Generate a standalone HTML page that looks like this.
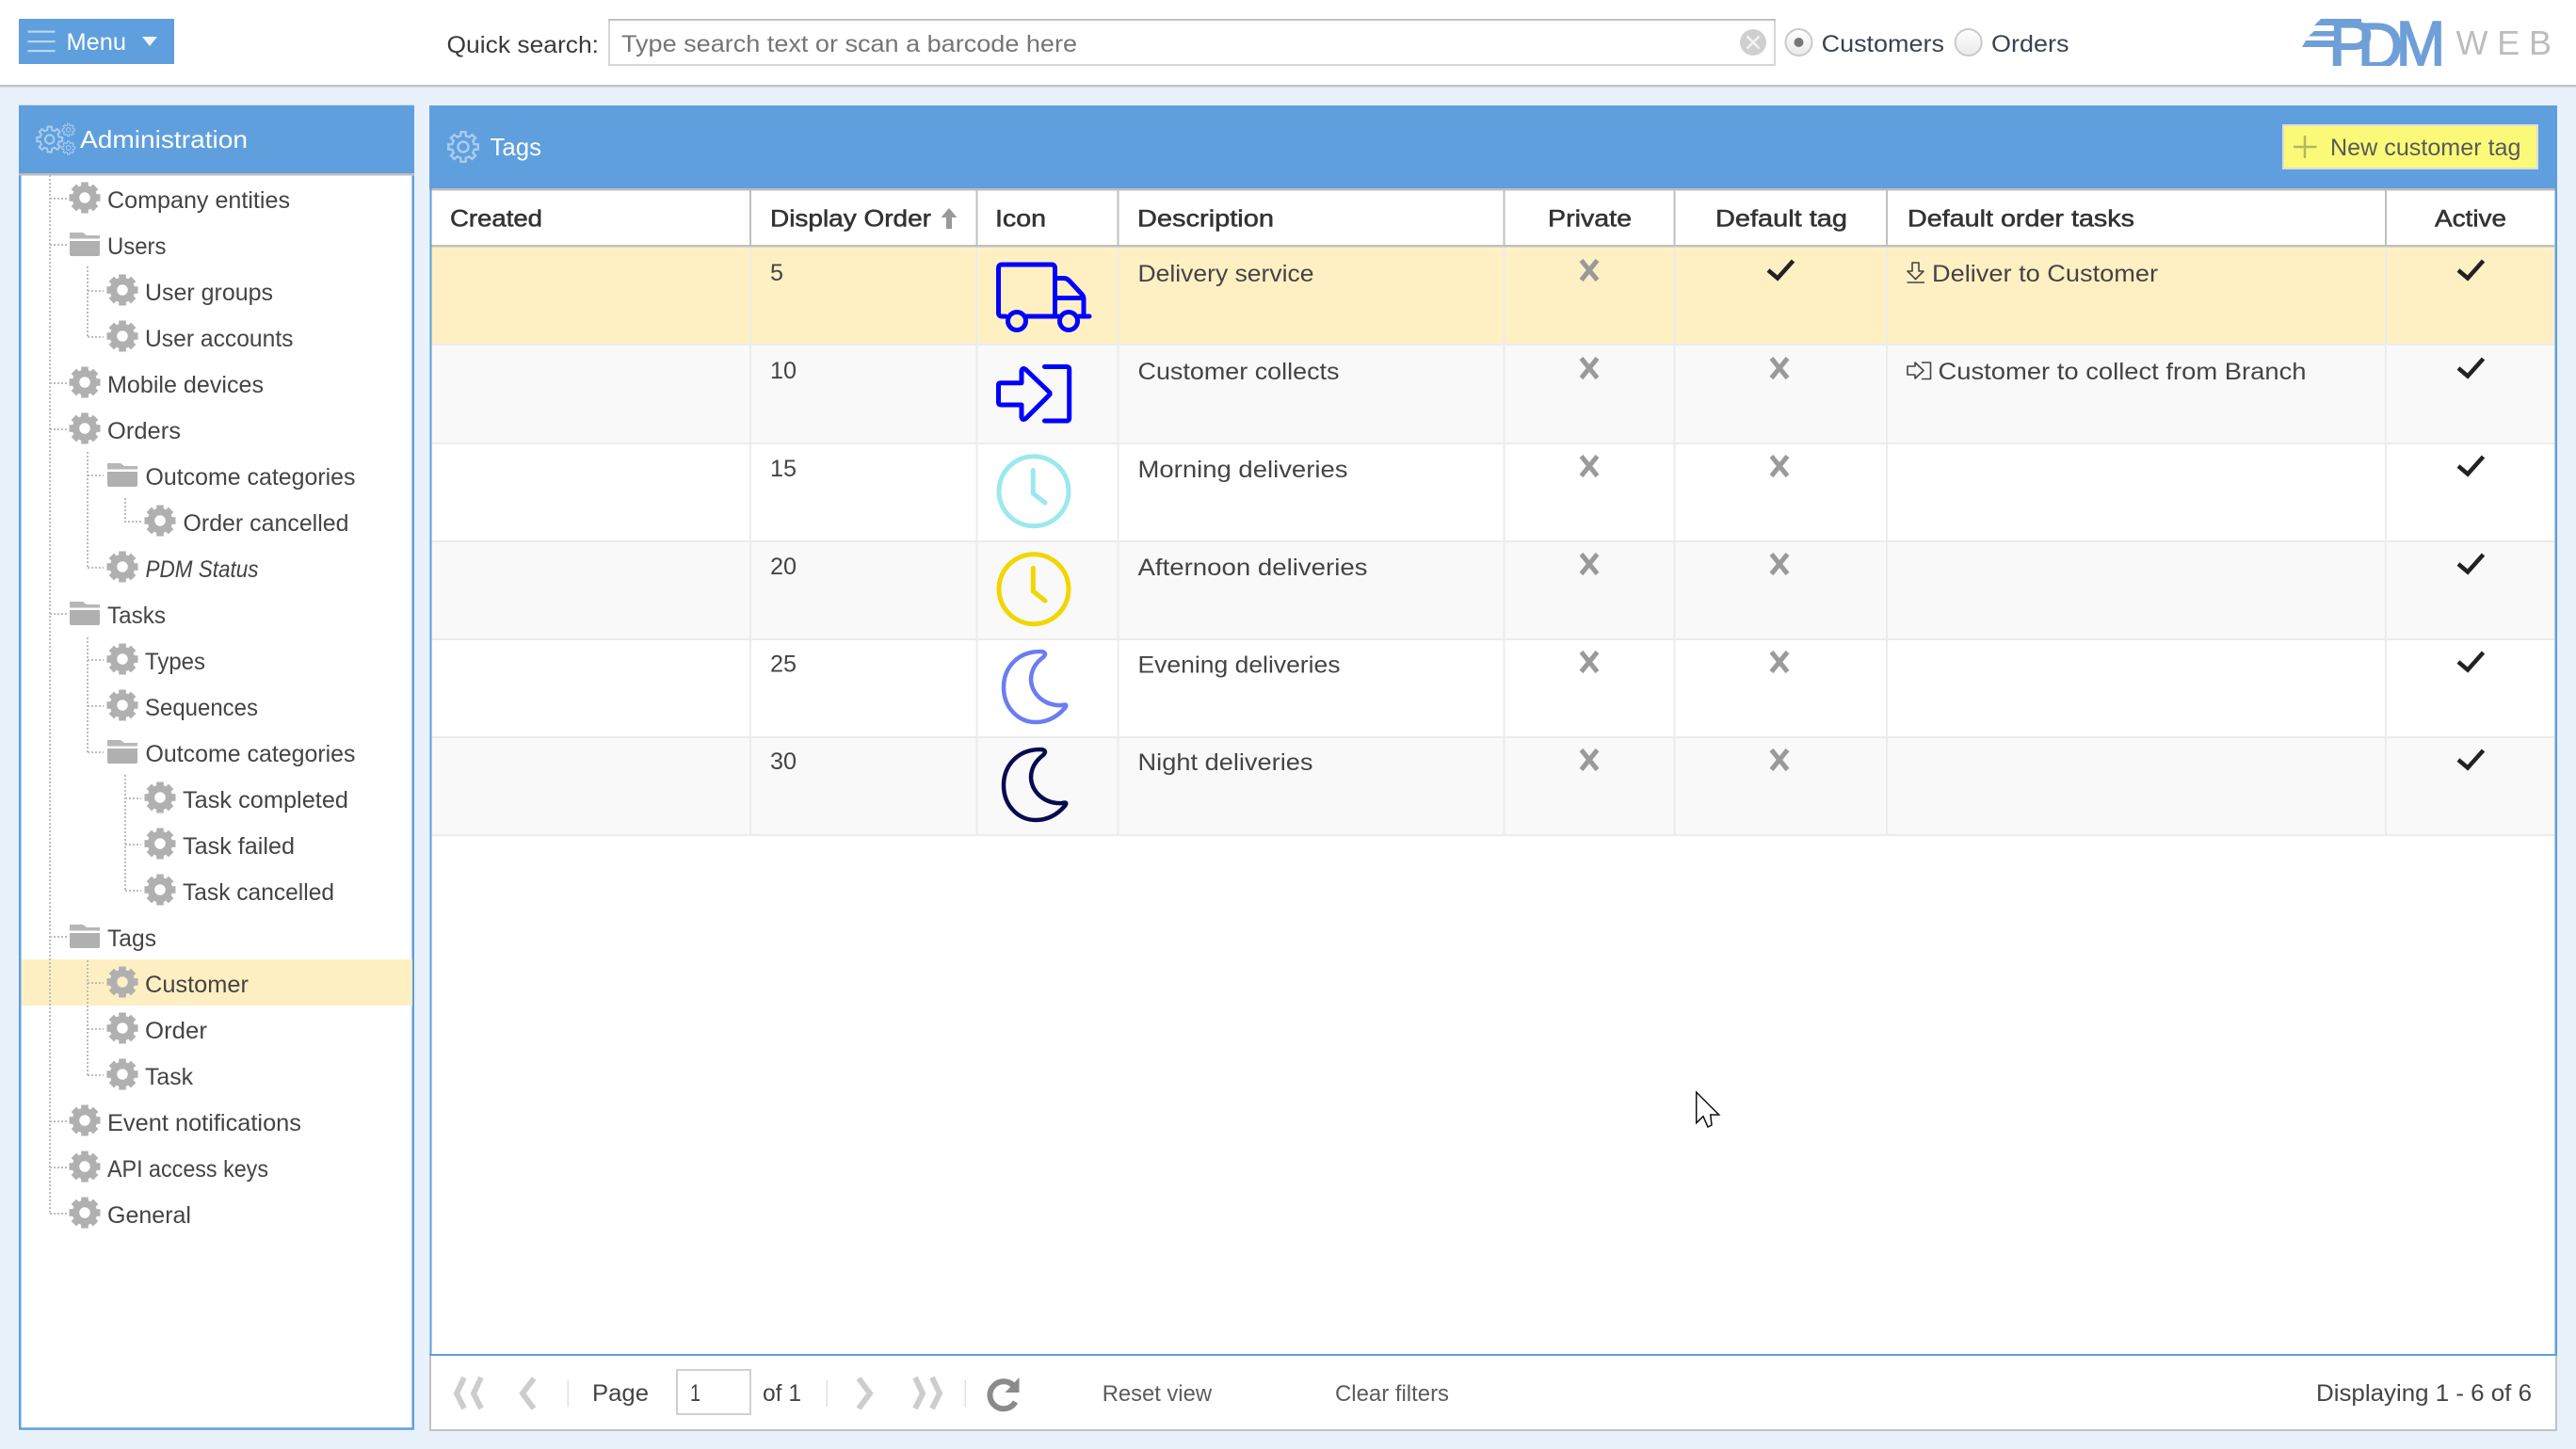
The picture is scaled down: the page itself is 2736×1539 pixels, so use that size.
<!DOCTYPE html>
<html><head><meta charset="utf-8"><title>Tags</title>
<style>
html,body{margin:0;padding:0;background:#e9f1fb;width:2736px;height:1539px;overflow:hidden}
svg{display:block;position:absolute;left:0;top:0}
text{font-family:"Liberation Sans",sans-serif;font-size:25px;fill:#444}
.h{stroke:#333;stroke-width:.55px;fill:#333}
.w{fill:#fff}
.lg{font-size:68px;fill:#6f9fd8;stroke:#6f9fd8;stroke-width:2px}
</style></head><body>
<svg width="2736" height="1539" viewBox="0 0 2736 1539" xmlns="http://www.w3.org/2000/svg">
<defs>
<g id="gf"><circle r="9.500" fill="none" stroke="#b0b0b0" stroke-width="7.500"/>
<g fill="#b0b0b0"><rect x="-3.800" y="-16.500" width="7.600" height="6"/><rect x="-3.800" y="-16.500" width="7.600" height="6" transform="rotate(45)"/><rect x="-3.800" y="-16.500" width="7.600" height="6" transform="rotate(90)"/><rect x="-3.800" y="-16.500" width="7.600" height="6" transform="rotate(135)"/><rect x="-3.800" y="-16.500" width="7.600" height="6" transform="rotate(180)"/><rect x="-3.800" y="-16.500" width="7.600" height="6" transform="rotate(225)"/><rect x="-3.800" y="-16.500" width="7.600" height="6" transform="rotate(270)"/><rect x="-3.800" y="-16.500" width="7.600" height="6" transform="rotate(315)"/></g></g>
<g id="fo"><path d="M0 0H14L18 3H32V6.500H0Z" fill="#b7b7b7"/><path d="M0 9H32V23.500L31 25H1L0 23.500Z" fill="#b0b0b0"/></g>
<path id="th" d="M-4.59-11.09L-2.9-11.64-2.5-15.8H2.5L2.9-11.64 4.59-11.09"/>
<g id="go" fill="none" stroke="#a9cdf0" stroke-width="2.400"><circle r="5.500"/><use href="#th"/><use href="#th" transform="rotate(45)"/><use href="#th" transform="rotate(90)"/><use href="#th" transform="rotate(135)"/><use href="#th" transform="rotate(180)"/><use href="#th" transform="rotate(225)"/><use href="#th" transform="rotate(270)"/><use href="#th" transform="rotate(315)"/></g>
<path id="x" d="M-8.500-10.500L8.500 10.500M8.500-10.500L-8.500 10.500" fill="none" stroke="#9a9a9a" stroke-width="5"/>
<path id="c" d="M-12 1L-2 9.500 14.500-9" fill="none" stroke="#222" stroke-width="4.500"/>
<path id="moon" d="M1105 692C1080 692 1066 710 1066 730C1066 752 1082 767 1100 767C1114 767 1124 760 1131 752C1134 748 1131 748 1128 749C1110 750 1096 738 1095 722C1095 712 1100 704 1108 698C1112 694 1109 692 1105 692Z" fill="none" stroke-width="4.500" stroke-linejoin="round"/>
<linearGradient id="rg" x1="0" y1="0" x2="0" y2="1"><stop offset="0" stop-color="#fff"/><stop offset="1" stop-color="#e9e9e9"/></linearGradient>
</defs>

<!-- top bar -->
<rect width="2736" height="90" fill="#fff"/>
<rect y="90" width="2736" height="2.500" fill="#c4c4c4"/>
<rect x="20" y="20" width="165" height="48" fill="#5f9fdd"/>
<g fill="#b9d6f2"><rect x="29.500" y="32.500" width="29" height="2.200"/><rect x="29.500" y="43" width="29" height="2.200"/><rect x="29.500" y="53" width="29" height="2.200"/></g>
<text class="w" x="70.500" y="53" textLength="63.500" lengthAdjust="spacingAndGlyphs">Menu</text>
<path d="M151 39H167L159 49Z" fill="#eef5fc"/>
<text x="474.500" y="56" textLength="161.500" lengthAdjust="spacingAndGlyphs" style="fill:#3a3a3a">Quick search:</text>
<rect x="647" y="21" width="1238" height="48" fill="#fff" stroke="#d6d6d6" stroke-width="2"/>
<rect x="646" y="20" width="1240" height="2" fill="#c2c2c2"/>
<text x="660" y="55" textLength="484" lengthAdjust="spacingAndGlyphs" style="fill:#757575">Type search text or scan a barcode here</text>
<circle cx="1862" cy="45" r="14" fill="#cfcfcf"/>
<path d="M1855.500 38.500L1868.500 51.500M1868.500 38.500L1855.500 51.500" stroke="#f3f3f3" stroke-width="2.500"/>
<circle cx="1910.500" cy="45" r="14" fill="url(#rg)" stroke="#cacaca" stroke-width="2"/>
<circle cx="1910.500" cy="45" r="5" fill="#777"/>
<text x="1934.600" y="55" textLength="130.400" lengthAdjust="spacingAndGlyphs" style="fill:#3a4250">Customers</text>
<circle cx="2090.700" cy="45" r="14" fill="url(#rg)" stroke="#cacaca" stroke-width="2"/>
<text x="2115" y="55" textLength="82.500" lengthAdjust="spacingAndGlyphs" style="fill:#3a4250">Orders</text>

<!-- logo -->
<svg x="2445" y="20" width="152" height="50" viewBox="2445 20 152 50">
<text class="lg" x="2473" y="70" textLength="48" lengthAdjust="spacingAndGlyphs">P</text>
<text class="lg" x="2504" y="72" textLength="48" lengthAdjust="spacingAndGlyphs">D</text>
<text class="lg" x="2545" y="70" textLength="52" lengthAdjust="spacingAndGlyphs">M</text>
<path d="M2465 20H2508V27H2458ZM2458 33H2486V38.500H2452ZM2449 43H2486V50H2445Z" fill="#6f9fd8"/>
<rect x="2445" y="27.500" width="34" height="5" fill="#fff"/><rect x="2445" y="38.500" width="34" height="4.500" fill="#fff"/>
<path d="M2486 46H2516V52H2486Z" fill="#6f9fd8"/>
</svg>
<text x="2608.500" y="58" textLength="101.500" lengthAdjust="spacing" style="font-size:36px;fill:#bdbdbd">WEB</text>

<!-- admin panel -->
<rect x="21.250" y="113" width="417.500" height="1404.500" fill="#fff" stroke="#5f9fdd" stroke-width="2.500"/>
<rect x="20" y="112" width="420" height="72" fill="#5f9fdd"/>
<rect x="20" y="184" width="420" height="2.500" fill="#bdbdbd"/>
<use href="#go" transform="translate(52.700 148) scale(.85)"/>
<use href="#go" transform="translate(72.700 138) scale(.42)"/>
<use href="#go" transform="translate(72.700 157) scale(.44)"/>
<text class="w" x="85" y="157" textLength="178" lengthAdjust="spacingAndGlyphs" style="font-size:26px">Administration</text>

<!-- tree selection -->
<rect x="23" y="1019" width="415" height="49" fill="#feefc3"/>

<!-- tree lines -->
<g fill="none" stroke="#bdbdbd" stroke-width="2" stroke-dasharray="2 2">
<path d="M53 186V1290"/>
<path d="M53 211H71M53 260H71M53 407H71M53 456H71M53 652H71M53 995H71M53 1191 H71M53 1240H71M53 1289H71"/>
<path d="M93 283V358M93 309H110M93 358H110"/>
<path d="M93 480V603M93 505H110M93 603H110"/>
<path d="M133 529V554H150"/>
<path d="M93 677V800M93 701H110M93 750H110M93 799H110"/>
<path d="M133 823V946M133 848H150M133 897H150M133 946H150"/>
<path d="M93 1020V1142M93 1044H110M93 1093H110M93 1142H110"/>
</g>

<!-- tree icons -->
<use href="#gf" x="90" y="210"/>
<use href="#fo" x="74" y="247"/>
<use href="#gf" x="130" y="308"/>
<use href="#gf" x="130" y="357"/>
<use href="#gf" x="90" y="406"/>
<use href="#gf" x="90" y="455"/>
<use href="#fo" x="114" y="492"/>
<use href="#gf" x="170" y="553"/>
<use href="#gf" x="130" y="602"/>
<use href="#fo" x="74" y="639"/>
<use href="#gf" x="130" y="700"/>
<use href="#gf" x="130" y="749"/>
<use href="#fo" x="114" y="786"/>
<use href="#gf" x="170" y="847"/>
<use href="#gf" x="170" y="896"/>
<use href="#gf" x="170" y="945"/>
<use href="#fo" x="74" y="982"/>
<use href="#gf" x="130" y="1043"/>
<use href="#gf" x="130" y="1092"/>
<use href="#gf" x="130" y="1141"/>
<use href="#gf" x="90" y="1190"/>
<use href="#gf" x="90" y="1239"/>
<use href="#gf" x="90" y="1288"/>

<!-- tree text -->
<text x="114" y="221" textLength="194" lengthAdjust="spacingAndGlyphs">Company entities</text>
<text x="114" y="270" textLength="62.500" lengthAdjust="spacingAndGlyphs">Users</text>
<text x="154" y="319" textLength="136" lengthAdjust="spacingAndGlyphs">User groups</text>
<text x="154" y="368" textLength="157.500" lengthAdjust="spacingAndGlyphs">User accounts</text>
<text x="114" y="417" textLength="166" lengthAdjust="spacingAndGlyphs">Mobile devices</text>
<text x="114" y="466" textLength="78" lengthAdjust="spacingAndGlyphs">Orders</text>
<text x="154.500" y="515" textLength="223" lengthAdjust="spacingAndGlyphs">Outcome categories</text>
<text x="194.500" y="564" textLength="176" lengthAdjust="spacingAndGlyphs">Order cancelled</text>
<text x="154.500" y="613" textLength="120" lengthAdjust="spacingAndGlyphs" style="font-style:italic">PDM Status</text>
<text x="114" y="662" textLength="62" lengthAdjust="spacingAndGlyphs">Tasks</text>
<text x="154" y="711" textLength="64" lengthAdjust="spacingAndGlyphs">Types</text>
<text x="154" y="760" textLength="120" lengthAdjust="spacingAndGlyphs">Sequences</text>
<text x="154.500" y="809" textLength="223" lengthAdjust="spacingAndGlyphs">Outcome categories</text>
<text x="194" y="858" textLength="176" lengthAdjust="spacingAndGlyphs">Task completed</text>
<text x="194" y="907" textLength="119" lengthAdjust="spacingAndGlyphs">Task failed</text>
<text x="194" y="956" textLength="161" lengthAdjust="spacingAndGlyphs">Task cancelled</text>
<text x="114" y="1005" textLength="52" lengthAdjust="spacingAndGlyphs">Tags</text>
<text x="154" y="1054" textLength="110" lengthAdjust="spacingAndGlyphs">Customer</text>
<text x="154" y="1103" textLength="66" lengthAdjust="spacingAndGlyphs">Order</text>
<text x="154" y="1152" textLength="51" lengthAdjust="spacingAndGlyphs">Task</text>
<text x="114" y="1201" textLength="206" lengthAdjust="spacingAndGlyphs">Event notifications</text>
<text x="114" y="1250" textLength="171" lengthAdjust="spacingAndGlyphs">API access keys</text>
<text x="114" y="1299" textLength="89" lengthAdjust="spacingAndGlyphs">General</text>

<!-- tags panel -->
<rect x="457" y="112" width="2258" height="1407" fill="#fff"/>
<rect x="456" y="112" width="2260" height="88" fill="#5f9fdd"/>
<rect x="456" y="200" width="2260" height="2.500" fill="#bdbdbd"/>
<use href="#go" transform="translate(492 156)"/>
<text class="w" x="520.500" y="165" textLength="54.500" lengthAdjust="spacingAndGlyphs" style="font-size:26px">Tags</text>
<rect x="2425" y="133" width="270" height="46" fill="#fafa78" stroke="#dcdcdc" stroke-width="2"/>
<path d="M2436 156H2460.500M2448 144V168" stroke="#b5b564" stroke-width="2.500"/>
<text x="2475" y="165" textLength="202.500" lengthAdjust="spacingAndGlyphs" style="fill:#5a5a5a">New customer tag</text>

<!-- rows -->
<rect x="458" y="262" width="2255" height="104" fill="#fff0c4"/>
<rect x="458" y="366" width="2255" height="104" fill="#f9f9f9"/>
<rect x="458" y="575" width="2255" height="104" fill="#f9f9f9"/>
<rect x="458" y="783" width="2255" height="104" fill="#f9f9f9"/>
<g fill="#ececec"><rect x="458" y="365" width="2255" height="2"/><rect x="458" y="470" width="2255" height="2"/><rect x="458" y="574" width="2255" height="2"/><rect x="458" y="678" width="2255" height="2"/><rect x="458" y="782" width="2255" height="2"/><rect x="458" y="886" width="2255" height="2"/></g>
<g fill="#ececec"><rect x="796" y="262" width="2" height="626"/><rect x="1036.500" y="262" width="2" height="626"/><rect x="1186.500" y="262" width="2" height="626"/><rect x="1596.500" y="262" width="2" height="626"/><rect x="1777.500" y="262" width="2" height="626"/><rect x="2003" y="262" width="2" height="626"/><rect x="2533" y="262" width="2" height="626"/></g>
<!-- header seps -->
<rect x="458" y="260" width="2255" height="2.500" fill="#c0c0c0"/>
<g fill="#c0c0c0"><rect x="796" y="202" width="2" height="58"/><rect x="1036.500" y="202" width="2" height="58"/><rect x="1186.500" y="202" width="2" height="58"/><rect x="1596.500" y="202" width="2" height="58"/><rect x="1777.500" y="202" width="2" height="58"/><rect x="2003" y="202" width="2" height="58"/><rect x="2533" y="202" width="2" height="58"/></g>
<!-- panel borders -->
<rect x="456.500" y="200" width="2" height="1240" fill="#5f9fdd"/>
<rect x="2713.500" y="200" width="2.500" height="1240" fill="#5f9fdd"/>
<rect x="456" y="1438" width="2260" height="2" fill="#5f9fdd"/>
<rect x="456" y="1440" width="2" height="80" fill="#c2c2c2"/>
<rect x="2714" y="1440" width="2" height="80" fill="#c2c2c2"/>
<rect x="456" y="1518" width="2260" height="2" fill="#c2c2c2"/>

<!-- headers -->
<text class="h" x="478" y="240.500" textLength="98" lengthAdjust="spacingAndGlyphs">Created</text>
<text class="h" x="818" y="240.500" textLength="171" lengthAdjust="spacingAndGlyphs">Display Order</text>
<path d="M1008 221L999.500 231H1005V243H1011V231H1016.500Z" fill="#999"/>
<text class="h" x="1057" y="240.500" textLength="54" lengthAdjust="spacingAndGlyphs">Icon</text>
<text class="h" x="1208" y="240.500" textLength="145" lengthAdjust="spacingAndGlyphs">Description</text>
<text class="h" x="1644" y="240.500" textLength="89" lengthAdjust="spacingAndGlyphs">Private</text>
<text class="h" x="1822" y="240.500" textLength="140" lengthAdjust="spacingAndGlyphs">Default tag</text>
<text class="h" x="2026" y="240.500" textLength="241" lengthAdjust="spacingAndGlyphs">Default order tasks</text>
<text class="h" x="2586" y="240.500" textLength="76" lengthAdjust="spacingAndGlyphs">Active</text>

<!-- display order -->
<text x="818" y="298" textLength="14" lengthAdjust="spacingAndGlyphs">5</text>
<text x="818" y="402" textLength="28" lengthAdjust="spacingAndGlyphs">10</text>
<text x="818" y="506" textLength="28" lengthAdjust="spacingAndGlyphs">15</text>
<text x="818" y="610" textLength="28" lengthAdjust="spacingAndGlyphs">20</text>
<text x="818" y="713.500" textLength="28" lengthAdjust="spacingAndGlyphs">25</text>
<text x="818" y="817" textLength="28" lengthAdjust="spacingAndGlyphs">30</text>

<!-- icons -->
<g fill="none" stroke="#0000ff" stroke-width="5" stroke-linejoin="round" stroke-linecap="round">
<path d="M1068 336H1064Q1060.500 336 1060.500 332V285Q1060.500 281 1064 281H1117Q1120.500 281 1120.500 285V336M1120.500 295.500H1130Q1133 295.500 1135.500 298L1149.500 313Q1151 315 1151 318V336M1120.500 316.500H1151M1089 336H1124M1146 336H1157"/>
<circle cx="1080" cy="341" r="9.500" fill="#fff0c4"/>
<circle cx="1135" cy="341" r="9.500" fill="#fff0c4"/>
<path d="M1109.500 389.500H1132.500Q1135.700 389.500 1135.700 392.500V444Q1135.700 447 1132.500 447H1109.500"/>
<path d="M1060.500 409Q1060.500 406.700 1063 406.700H1085V394Q1086 390 1089.500 392.500L1115 417L1115 419L1089.500 444.500Q1086 447 1085 443V430H1063Q1060.500 430 1060.500 427.500Z"/>
</g>
<g fill="none" stroke="#9ce8ef" stroke-width="5" stroke-linecap="round"><circle cx="1098" cy="521.700" r="37"/><path d="M1097.300 499.500V524L1110 534"/></g>
<g fill="none" stroke="#f2d600" stroke-width="5" stroke-linecap="round"><circle cx="1098" cy="625.700" r="37"/><path d="M1097.300 603.500V628L1110 638"/></g>
<use href="#moon" stroke="#6b7df0"/>
<use href="#moon" stroke="#0a0a50" y="104"/>

<!-- descriptions -->
<text x="1208.500" y="299" textLength="187" lengthAdjust="spacingAndGlyphs">Delivery service</text>
<text x="1208.500" y="403" textLength="214" lengthAdjust="spacingAndGlyphs">Customer collects</text>
<text x="1208.500" y="507" textLength="223" lengthAdjust="spacingAndGlyphs">Morning deliveries</text>
<text x="1208.500" y="611" textLength="244" lengthAdjust="spacingAndGlyphs">Afternoon deliveries</text>
<text x="1208.500" y="714.500" textLength="215" lengthAdjust="spacingAndGlyphs">Evening deliveries</text>
<text x="1208.500" y="818" textLength="186" lengthAdjust="spacingAndGlyphs">Night deliveries</text>

<!-- private -->
<use href="#x" x="1688" y="287"/><use href="#x" x="1688" y="391"/><use href="#x" x="1688" y="495"/><use href="#x" x="1688" y="599"/><use href="#x" x="1688" y="703"/><use href="#x" x="1688" y="807"/>
<!-- default tag -->
<use href="#c" x="1890" y="286"/>
<use href="#x" x="1890" y="391"/><use href="#x" x="1890" y="495"/><use href="#x" x="1890" y="599"/><use href="#x" x="1890" y="703"/><use href="#x" x="1890" y="807"/>
<!-- active -->
<use href="#c" x="2623" y="286"/><use href="#c" x="2623" y="390"/><use href="#c" x="2623" y="494"/><use href="#c" x="2623" y="598"/><use href="#c" x="2623" y="702"/><use href="#c" x="2623" y="806"/>

<!-- tasks -->
<g fill="none" stroke="#444" stroke-width="1.600" stroke-linejoin="round">
<path d="M2031 279H2038V288H2043L2034.500 296.500 2026 288H2031Z"/>
<path d="M2025.500 300H2044"/>
<path d="M2026 389H2034V385L2043 393.500 2034 402V398H2026Z"/>
<path d="M2041 385H2050.500V402.500H2041"/>
</g>
<text x="2052" y="299" textLength="240" lengthAdjust="spacingAndGlyphs">Deliver to Customer</text>
<text x="2058.500" y="403" textLength="391" lengthAdjust="spacingAndGlyphs">Customer to collect from Branch</text>

<!-- pager -->
<g fill="none" stroke="#cdcdcd" stroke-width="6">
<path d="M493 1463L485 1480 493 1496M511 1463L503 1480 511 1496"/>
<path d="M567 1464L555 1480 567 1496"/>
<path d="M912 1464L924 1480 912 1496"/>
<path d="M972 1463L980 1480 972 1496M990 1463L998 1480 990 1496"/>
</g>
<g fill="#e0e0e0"><rect x="602.500" y="1466" width="1.500" height="28"/><rect x="877.500" y="1466" width="1.500" height="28"/><rect x="1024.500" y="1466" width="1.500" height="28"/></g>
<text x="629" y="1488" textLength="60" lengthAdjust="spacingAndGlyphs">Page</text>
<rect x="719" y="1455" width="78" height="47" fill="#fff" stroke="#d0d0d0" stroke-width="2"/>
<text x="733" y="1488" textLength="11" lengthAdjust="spacingAndGlyphs">1</text>
<text x="810" y="1488" textLength="41" lengthAdjust="spacingAndGlyphs">of 1</text>
<g transform="translate(1.500 0)">
<path d="M1076 1473A14.500 14.500 0 1 0 1077 1489" fill="none" stroke="#8a8a8a" stroke-width="6"/>
<path d="M1081 1463V1479H1066Z" fill="#8a8a8a"/>
</g>
<text x="1170.700" y="1488" textLength="116.300" lengthAdjust="spacingAndGlyphs" style="fill:#5c5c5c;font-size:24px">Reset view</text>
<text x="1418" y="1488" textLength="121" lengthAdjust="spacingAndGlyphs" style="fill:#5c5c5c;font-size:24px">Clear filters</text>
<text x="2460" y="1488" textLength="229" lengthAdjust="spacingAndGlyphs">Displaying 1 - 6 of 6</text>

<!-- cursor -->
<path d="M1801.700 1160V1192.700L1809 1185.700 1814 1197 1818 1195 1816.700 1184H1825.700Z" fill="#fff" stroke="#111" stroke-width="1.500" stroke-linejoin="miter"/>
</svg>
</body></html>
